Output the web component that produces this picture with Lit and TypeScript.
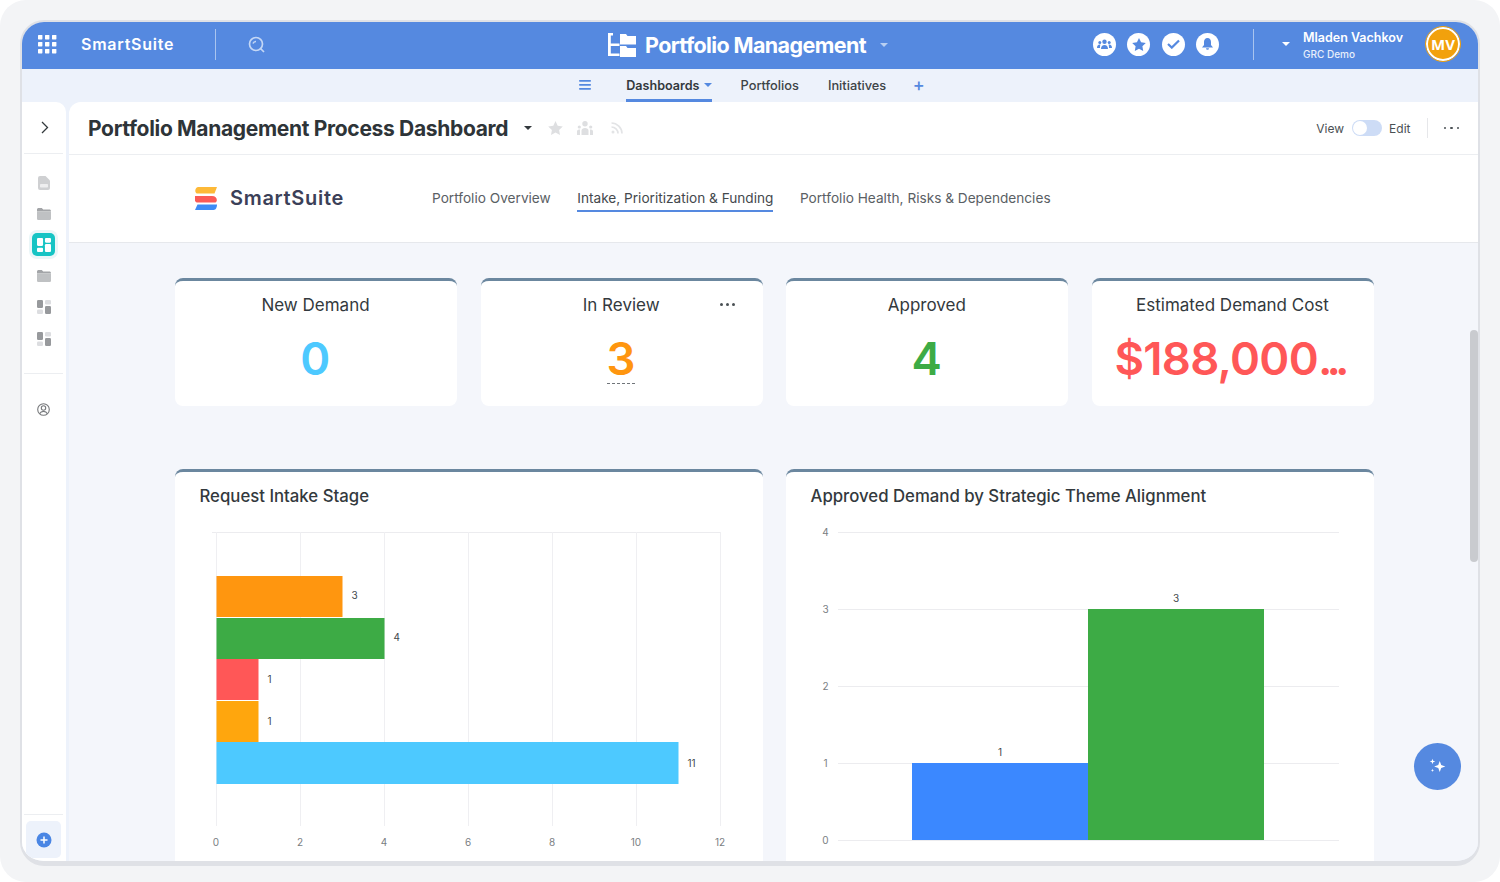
import { LitElement, html, css, svg } from "lit";
import { customElement } from "lit/decorators.js";

const dots = [0, 1, 2].flatMap((r) => [0, 1, 2].map((c) => svg`<rect x=${c * 7} y=${r * 7} width="4.4" height="4.4" rx=".6" fill="#fff"/>`));

const leftBars = [
  { y: 576, w: 126, h: 41, c: "#ff960f", l: "3", b: 599 },
  { y: 618, w: 168, h: 41, c: "#3dab45", l: "4", b: 641 },
  { y: 659, w: 42, h: 41, c: "#ff5757", l: "1", b: 683 },
  { y: 701, w: 42, h: 41, c: "#ffa60d", l: "1", b: 725 },
  { y: 742, w: 462, h: 42, c: "#4dc9ff", l: "11", b: 767 },
];

function leftChart() {
  const ox = 175, oy = 520;
  const xs = [0, 2, 4, 6, 8, 10, 12];
  return svg`<svg class="plot" width="588" height="342" viewBox="${ox} ${oy} 588 342">
    <line x1="212" x2="721" y1="532.5" y2="532.5" stroke="#ececef"/>
    ${xs.map((v) => svg`<line x1=${216.5 + v * 42} x2=${216.5 + v * 42} y1="532" y2="826" stroke="#efeff2"/>
      <text x=${216 + v * 42} y="846" text-anchor="middle" class="tick">${v}</text>`)}
    ${leftBars.map((b) => svg`<rect x="216.500" y=${b.y} width=${b.w} height=${b.h} fill=${b.c}/>
      <text x=${216 + b.w + 9.5} y=${b.b} class="val">${b.l}</text>`)}
  </svg>`;
}

function rightChart() {
  const ox = 786, oy = 520;
  const ys = [840, 763, 686, 609, 532];
  return svg`<svg class="plot" width="588" height="342" viewBox="${ox} ${oy} 588 342">
    ${ys.map((y, i) => svg`<line x1="838" x2="1339" y1=${y + 0.5} y2=${y + 0.5} stroke="#ececef"/>
      <text x="825.5" y=${y + 4} text-anchor="middle" class="tick">${i}</text>`)}
    <rect x="912" y="763" width="176" height="77" fill="#3b88ff"/>
    <rect x="1088" y="609" width="176" height="231" fill="#3dab45"/>
    <text x="1000" y="756" text-anchor="middle" class="val">1</text>
    <text x="1176" y="602" text-anchor="middle" class="val">3</text>
  </svg>`;
}

const folder = html`<svg width="14" height="12" viewBox="0 0 14 12"><path d="M0 1.6C0 .7.7 0 1.6 0h3.2l1.4 1.6h6.2c.9 0 1.6.7 1.6 1.6v.4H0z" fill="#a3a5a8"/><path d="M0 3.4h14v7c0 .9-.7 1.6-1.6 1.6H1.6C.7 12 0 11.300 0 10.400z" fill="#bfc1c3"/></svg>`;
const blocks = html`<svg width="14" height="14" viewBox="0 0 14 14"><rect width="6" height="8" rx="1.2" fill="#97999c"/><rect x="8" width="6" height="4.500" rx="1.2" fill="#dcdde0"/><rect y="9.500" width="6" height="4.500" rx="1.200" fill="#dcdde0"/><rect x="8" y="6" width="6" height="8" rx="1.200" fill="#97999c"/></svg>`;

@customElement("app-root")
export class AppRoot extends LitElement {
  static styles = css`
    :host { display: block; width: 1500px; height: 882px; background: #fff; font-family: Inter, "Liberation Sans", sans-serif; color: #33393d; overflow: hidden; }
    svg { display: block; }
    .page { height: 882px; box-sizing: border-box; background: #f3f4f6; border-radius: 26px; padding: 20px 20px 0; }
    .frame { position: relative; height: 846px; box-sizing: border-box; border: 2px solid #dfe1e6; border-bottom-width: 5px; border-radius: 24px; overflow: hidden; background: #edf2fb; display: flex; flex-direction: column; }
    .top { flex: none; height: 47px; background: #5589e0; color: #fff; display: grid; grid-template-columns: 1fr auto 1fr; align-items: center; }
    .top-left, .top-right, .title-wrap { display: flex; align-items: center; }
    .top-left { padding-left: 16px; }
    .wordmark { font-size: 16px; font-weight: 600; letter-spacing: .75px; margin-left: 24px; white-space: nowrap; position: relative; top: -2px; }
    .vsep { width: 1px; height: 31px; background: #a9c4ef; margin-top: -2px; }
    .top-left .vsep { margin-left: 41px; margin-right: 32px; }
    .title-wrap { gap: 9px; margin-top: -2px; padding-right: 4px; }
    .title { font-size: 21.500px; font-weight: 700; letter-spacing: -.6px; white-space: nowrap; }
    .caret { width: 0; height: 0; border: 4px solid transparent; border-top-color: currentColor; border-bottom-width: 0; }
    .title-wrap .caret { margin-left: 5px; color: #b8cff2; }
    .top-right { justify-content: flex-end; padding-right: 18px; margin-top: -3px; }
    .circle { width: 23px; height: 23px; border-radius: 50%; background: #fff; margin-right: 11.300px; display: flex; align-items: center; justify-content: center; }
    .top-right .vsep { margin: 0 28px 0 34px; }
    .user { margin: 2px 23px 0 13px; width: 100px; }
    .user b { display: block; font-size: 12.500px; font-weight: 600; line-height: 15px; white-space: nowrap; }
    .user span { display: block; font-size: 10px; font-weight: 500; line-height: 14px; margin-top: 2px; color: #e8effb; }
    .avatar { width: 30px; height: 30px; border-radius: 50%; border: 2px solid #fff; outline: 1px solid #f2a10c; background: #f2a10c; font-size: 15px; font-weight: 700; display: flex; align-items: center; justify-content: center; box-sizing: content-box; font-family: "Open Sans", sans-serif; }
    .sub { flex: none; height: 33px; display: flex; align-items: stretch; justify-content: center; font-size: 12.800px; font-weight: 500; color: #3d4347; padding-left: 4px; }
    .sub-item { display: flex; align-items: center; gap: 3px; box-sizing: border-box; padding-bottom: 1px; }
    .sub-item.on { border-bottom: 3px solid #5589e0; padding-top: 2px; padding-bottom: 0; color: #33393d; font-size: 12.600px; font-weight: 600; gap: 4px; }
    .sub-item .caret { color: #5589e0; }
    .sub-list { display: flex; gap: 29px; margin-left: 35px; }
    .plus { color: #5589e0; font-size: 18px; font-weight: 500; margin-left: 26.500px; display: flex; align-items: center; line-height: 1; padding-bottom: 2px; }
    .burger { display: flex; align-items: center; padding-bottom: 1px; }
    .body { flex: 1; min-height: 0; display: flex; gap: 3px; }
    .side { width: 44px; flex: none; box-sizing: border-box; padding-right: 1px; background: #fff; border-top-right-radius: 10px; display: flex; flex-direction: column; align-items: center; }
    .side-head { width: 39px; height: 52px; border-bottom: 1px solid #eceef1; display: flex; align-items: center; justify-content: center; flex: none; box-sizing: border-box; }
    .chev { margin-left: 2px; }
    .side-icons { display: flex; flex-direction: column; align-items: center; gap: 0; margin-top: 13px; }
    .si { width: 31px; height: 31.200px; display: flex; align-items: center; justify-content: center; }
    .si .teal { width: 23px; height: 23px; background: #16c4c4; border-radius: 5px; box-shadow: 0 0 0 3px #eaf6f8; display: flex; align-items: center; justify-content: center; }
    .side-sep { width: 39px; border-top: 1px solid #eceef1; margin-top: 19px; }
    .si.user-ic { margin-top: 20px; }
    .spacer { flex: 1; }
    .side-add { width: 39px; border-top: 1px solid #eceef1; padding-top: 6px; padding-bottom: 3px; display: flex; justify-content: center; }
    .add { width: 35px; height: 37px; background: #edf2fb; border-radius: 5px; display: flex; align-items: center; justify-content: center; }
    .main { flex: 1; min-width: 0; position: relative; background: #f4f6fb; border-top-left-radius: 12px; overflow: hidden; display: flex; flex-direction: column; }
    .head { flex: none; height: 53px; box-sizing: border-box; background: #fff; border-bottom: 1px solid #eceef1; display: flex; align-items: center; padding: 0 19px; }
    .head h1 { margin: 0; font-size: 21px; font-weight: 700; letter-spacing: -.32px; color: #2e3438; white-space: nowrap; }
    .head .caret { color: #33393d; margin-left: 16px; border-width: 4.500px; border-bottom-width: 0; }
    .head-ic { display: flex; align-items: center; gap: 14px; margin-left: 16px; }
    .rss { margin-left: 4px; }
    .head-right { margin-left: auto; display: flex; align-items: center; font-size: 12px; color: #4a5054; }
    .toggle { width: 30px; height: 16px; border-radius: 8px; background: #cddcf6; margin: 0 7px 0 8px; position: relative; }
    .toggle::after { content: ""; position: absolute; left: 1px; top: 1px; width: 14px; height: 14px; border-radius: 50%; background: #fff; }
    .hsep { width: 1px; height: 20px; background: #e6e7ea; margin: 0 16px 0 16px; }
    .more { display: flex; gap: 4px; }
    .more i { width: 2.500px; height: 2.500px; border-radius: 50%; background: #4a5054; }
    .tabs { flex: none; height: 88px; box-sizing: border-box; background: #fff; border-bottom: 1px solid #e6e8ec; display: flex; align-items: center; padding-left: 126px; }
    .logo { display: flex; align-items: center; gap: 13px; font-size: 20px; font-weight: 600; color: #3b4058; letter-spacing: .7px; width: 237px; flex: none; margin-top: -1px; }
    .tab-list { display: flex; gap: 26.500px; font-size: 13.650px; color: #5a6064; margin-bottom: 3px; }
    .tab { padding: 8px 0 4px; white-space: nowrap; border-bottom: 2px solid transparent; }
    .tab.on { border-bottom-color: #5589e0; color: #44494d; }
    .content { flex: 1; min-height: 0; padding: 35px 104px 0 106px; overflow: hidden; }
    .kpis { display: grid; grid-template-columns: repeat(4, 282px); column-gap: 23.670px; }
    .card { background: #fff; border-top: 3px solid #6b879f; border-radius: 8px; box-sizing: border-box; }
    .kpi { height: 128px; text-align: center; position: relative; padding-top: 13px; padding-right: 1px; }
    .kpi h3 { margin: 0; font-size: 17px; font-weight: 400; line-height: 22px; color: #33393d; }
    .kpi .num { font-size: 45.500px; font-weight: 600; line-height: 56px; margin-top: 15px; letter-spacing: -.75px; white-space: nowrap; padding-right: 1px; }
    .kpi .num span { letter-spacing: -6px; margin-right: 6px; }
    .kpi .more { position: absolute; top: 22px; right: 28px; gap: 3px; }
    .kpi .more i { width: 3px; height: 3px; }
    .dash { position: absolute; left: 126px; top: 102px; width: 28px; border-top: 1px dashed #70757a; }
    .charts { display: grid; grid-template-columns: repeat(2, 588px); column-gap: 23px; margin-top: 63px; }
    .chart { height: 420px; padding-top: 13px; }
    .chart h2 { margin: 0 0 0 24.500px; font-size: 16.750px; font-weight: 500; line-height: 22px; color: #33393d; }
    .plot { margin-top: 13px; }
    .tick { font: 10px Inter, sans-serif; fill: #7a7e82; }
    .val { font: 10px Inter, sans-serif; fill: #44494d; }
    .scroll { position: absolute; right: 0; top: 228px; width: 8px; height: 232px; background: #c9cbcf; border-radius: 4px; }
    .fab { position: absolute; right: 17px; bottom: 71px; width: 47px; height: 47px; border-radius: 50%; background: #5589e0; display: flex; align-items: center; justify-content: center; }
  `;

  render() {
    return html`<div class="page"><div class="frame">
      <header class="top">
        <div class="top-left">
          <svg width="19" height="19" viewBox="0 0 19 19" style="margin-top:-2px">${dots}</svg>
          <span class="wordmark">SmartSuite</span>
          <span class="vsep"></span>
          <svg width="18" height="18" viewBox="0 0 18 18" fill="none" stroke="#c4d7f5" stroke-width="1.700" style="margin-top:-2px"><circle cx="8" cy="8" r="6.500"/><path d="M5 7.500c.5-1.300 1.700-2 3-2M12.500 12.500l3.500 3.500"/></svg>
        </div>
        <div class="title-wrap">
          <svg width="28" height="24" viewBox="0 0 28 24" fill="#fff"><path d="M0 0h5v2.500H2.800v8h8.700V13H2.800v7.500h8.700V23H0z"/><path d="M12 1h6l1.500 2H28v8.500H12zM12 13h6l1.500 2H28v9H12z"/></svg>
          <span class="title">Portfolio Management</span>
          <span class="caret"></span>
        </div>
        <div class="top-right">
          <span class="circle"><svg width="15" height="11" viewBox="0 0 15 11" fill="#5589e0"><circle cx="7.500" cy="2.800" r="2.200"/><circle cx="2.800" cy="3.600" r="1.500"/><circle cx="12.200" cy="3.600" r="1.500"/><path d="M4 10c0-2.800 1.400-4 3.500-4s3.500 1.200 3.500 4zM0 9c0-2 1-3.500 2.800-3.500l.6.100C3 7 3 8 3 9zM15 9c0-2-1-3.500-2.800-3.500l-.6.100c.4 1.400.4 2.400.4 3.400z"/></svg></span>
          <span class="circle"><svg width="14" height="13" viewBox="0 0 14 13" fill="#5589e0"><path d="M7 0l2.100 4.300 4.700.7-3.400 3.300.8 4.700L7 10.800 2.800 13l.8-4.700L.2 5l4.700-.7z"/></svg></span>
          <span class="circle"><svg width="13" height="10" viewBox="0 0 13 10" fill="none" stroke="#5589e0" stroke-width="2.200"><path d="M1 5l3.800 3.600L12 1.500"/></svg></span>
          <span class="circle" style="margin-right:0"><svg width="11" height="12" viewBox="0 0 11 12" fill="#5589e0"><path d="M5.500 0C7.800 0 9 1.800 9 4v3l2 2.500H0L2 7V4C2 1.800 3.200 0 5.500 0zM4 10.300h3a1.500 1.500 0 0 1-3 0z"/></svg></span>
          <span class="vsep"></span>
          <span class="caret"></span>
          <div class="user"><b>Mladen Vachkov</b><span>GRC Demo</span></div>
          <div class="avatar">MV</div>
        </div>
      </header>
      <nav class="sub">
        <div class="burger"><svg width="12" height="10" viewBox="0 0 12 10" fill="#5589e0"><rect width="12" height="1.700" rx=".8"/><rect y="4" width="12" height="1.700" rx=".8"/><rect y="8" width="12" height="1.700" rx=".8"/></svg></div>
        <div class="sub-list">
          <div class="sub-item on">Dashboards <span class="caret"></span></div>
          <div class="sub-item">Portfolios</div>
          <div class="sub-item">Initiatives</div>
        </div>
        <div class="plus">+</div>
      </nav>
      <div class="body">
        <aside class="side">
          <div class="side-head"><svg class="chev" width="8" height="13" viewBox="0 0 8 13" fill="none" stroke="#33393d" stroke-width="1.300"><path d="M1 1l5.500 5.500L1 12"/></svg></div>
          <div class="side-icons">
            <div class="si"><svg width="12" height="14" viewBox="0 0 12 14"><path d="M2 0h5.500L12 4.500V12a2 2 0 0 1-2 2H2a2 2 0 0 1-2-2V2a2 2 0 0 1 2-2z" fill="#cfd0d2"/><rect x="2" y="8" width="8" height="3.500" rx=".8" fill="#eeeeef"/></svg></div>
            <div class="si">${folder}</div>
            <div class="si"><span class="teal"><svg width="14" height="14" viewBox="0 0 15 15" fill="#fff"><rect width="6.500" height="8.500" rx="1.200"/><rect x="8.500" width="6.500" height="5" rx="1.200"/><rect y="10.500" width="6.500" height="4.500" rx="1.200"/><rect x="8.500" y="6.500" width="6.500" height="8.500" rx="1.200"/></svg></span></div>
            <div class="si">${folder}</div>
            <div class="si">${blocks}</div>
            <div class="si">${blocks}</div>
          </div>
          <div class="side-sep"></div>
          <div class="si user-ic"><svg width="13" height="13" viewBox="0 0 13 13" fill="none" stroke="#77797c" stroke-width="1.100"><circle cx="6.500" cy="6.500" r="5.800"/><circle cx="6.500" cy="5" r="2.200"/><path d="M2.600 10.800c.8-1.700 2.200-2.400 3.900-2.400s3.100.7 3.900 2.400"/></svg></div>
          <div class="spacer"></div>
          <div class="side-add"><div class="add"><svg width="16" height="16" viewBox="0 0 16 16"><circle cx="8" cy="8" r="7.500" fill="#4a86e4"/><path d="M8 4.500v7M4.500 8h7" stroke="#fff" stroke-width="1.500"/></svg></div></div>
        </aside>
        <main class="main">
          <div class="head">
            <h1>Portfolio Management Process Dashboard</h1>
            <span class="caret"></span>
            <div class="head-ic">
              <svg width="15" height="14" viewBox="0 0 15 14" fill="#dedfe1"><path d="M7.500 0l2.200 4.700 5.100.7-3.700 3.500.9 5.100-4.500-2.500L3 14l.9-5.100L.2 5.400l5.100-.7z"/></svg>
              <svg width="16" height="14" viewBox="0 0 16 14" fill="#dedfe1"><circle cx="8" cy="2.800" r="2.700"/><circle cx="2.300" cy="6" r="1.600"/><circle cx="13.700" cy="6" r="1.600"/><path d="M4.500 14V9.500c0-1.500 1.500-2.500 3.500-2.500s3.500 1 3.500 2.500V14zM0 14v-3.500C0 9 1.200 8.500 3 8.500V14zM16 14v-3.500c0-1.500-1.200-2-3-2V14z"/></svg>
              <svg class="rss" width="12" height="12" viewBox="0 0 12 12" fill="none" stroke="#e3e4e6" stroke-width="1.700"><path d="M.5 1C6 1 11 6 11 11.500M.5 5C4 5 7 8 7 11.500"/><circle cx="2" cy="10" r="1.500" fill="#e3e4e6" stroke="none"/></svg>
            </div>
            <div class="head-right">View<span class="toggle"></span>Edit<span class="hsep"></span><span class="more"><i></i><i></i><i></i></span></div>
          </div>
          <div class="tabs">
            <div class="logo">
              <svg width="22" height="23" viewBox="0 0 22 23"><path d="M3.500 0H22l-2.500 6.500H2C-.5 6.500-.5 0 3.500 0z" fill="#fdb938"/><path d="M0 9h17c5 0 6 5 3.500 6.500H2.500C-.5 15.500-1 11 0 9z" fill="#fb5a56"/><path d="M2.500 17.500H22c0 2.500-1 5.500-3.500 5.500H0z" fill="#3e8bf5"/></svg>
              SmartSuite
            </div>
            <div class="tab-list">
              <div class="tab">Portfolio Overview</div>
              <div class="tab on">Intake, Prioritization &amp; Funding</div>
              <div class="tab">Portfolio Health, Risks &amp; Dependencies</div>
            </div>
          </div>
          <div class="content">
            <div class="kpis">
              <div class="card kpi"><h3>New Demand</h3><div class="num" style="color:#4dc9ff">0</div></div>
              <div class="card kpi"><h3>In Review</h3><span class="more"><i></i><i></i><i></i></span><div class="num" style="color:#ff960f">3</div><span class="dash"></span></div>
              <div class="card kpi"><h3>Approved</h3><div class="num" style="color:#3dab45">4</div></div>
              <div class="card kpi"><h3>Estimated Demand Cost</h3><div class="num" style="color:#ff5757">$188,000<span>...</span></div></div>
            </div>
            <div class="charts">
              <div class="card chart"><h2>Request Intake Stage</h2>${leftChart()}</div>
              <div class="card chart"><h2>Approved Demand by Strategic Theme Alignment</h2>${rightChart()}</div>
            </div>
          </div>
          <div class="scroll"></div>
          <div class="fab"><svg width="19" height="19" viewBox="0 0 17 17" fill="#fff"><path d="M10.500 3.500l1.300 3.700 3.700 1.300-3.700 1.300-1.300 3.700-1.300-3.700-3.700-1.300 3.700-1.300z"/><path d="M4 1.500l.6 1.900 1.900.6-1.900.6L4 6.500l-.6-1.900L1.500 4l1.900-.6z"/><path d="M4 10.500l.4 1.100 1.100.4-1.100.4-.4 1.100-.4-1.100-1.100-.4 1.100-.4z"/></svg></div>
        </main>
      </div>
    </div></div>`;
  }
}
